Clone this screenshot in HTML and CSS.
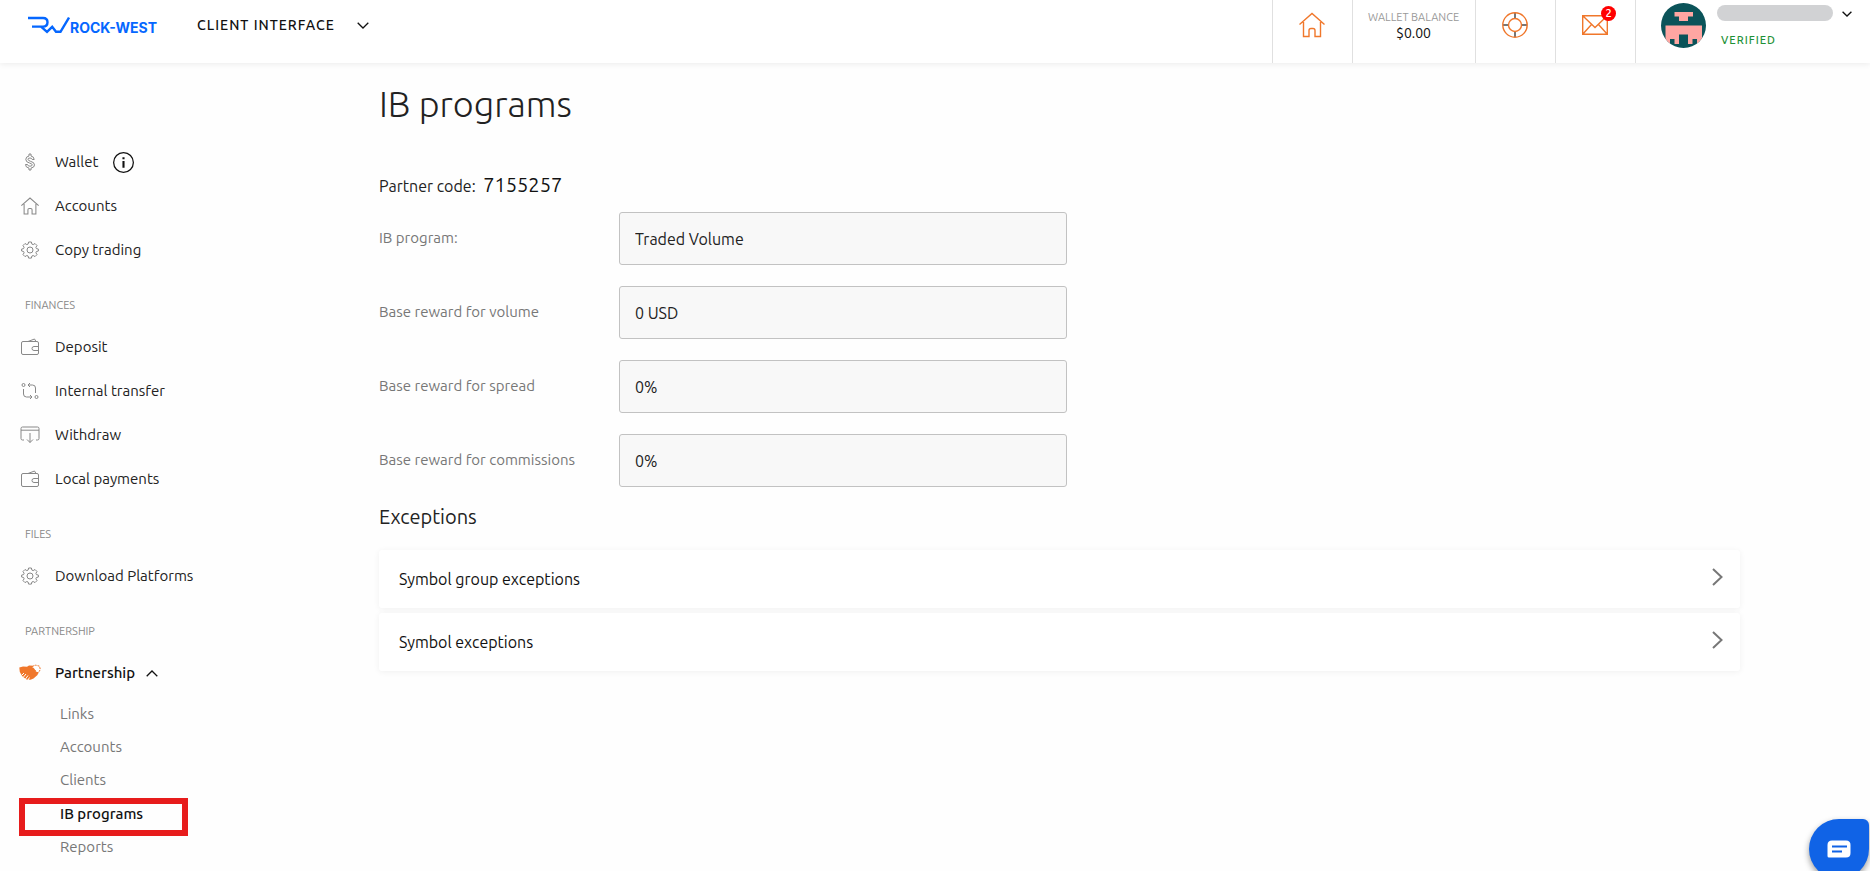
FILE: index.html
```
<!DOCTYPE html>
<html lang="en">
<head>
<meta charset="utf-8">
<title>IB programs</title>
<link rel="stylesheet" href="styles.css">
</head>
<body>
<svg class="sprite" aria-hidden="true">
  <symbol id="home" viewBox="0 0 26 26"><path d="M.5 12.500 13 1.500 25.500 12.500M4.500 10v14.500h5.500v-6q0-2 2-2h2q2 0 2 2v6h5.500V10"/></symbol>
  <symbol id="gear" viewBox="0 0 18 18"><path d="M7.600 1h2.800l.5 2.100 1.300.5 1.800-1.100 2 2-1.100 1.800.5 1.300 2 .5v1.900l-2 .5-.5 1.300 1.100 1.800-2 2-1.800-1.100-1.300.5-.5 2.100H7.600l-.5-2.100-1.300-.5L4 15.600l-2-2 1.100-1.800-.5-1.300L.600 10V8.100l2-.5.5-1.300L2 4.500l2-2 1.800 1.100 1.300-.5z"/><circle cx="9" cy="9" r="3"/></symbol>
  <symbol id="purse" viewBox="0 0 18 18"><path d="M2 3.500h14q1.500 0 1.500 1.500v10q0 1.500-1.500 1.500H2Q.5 16.500 .5 15V5Q.5 3.500 2 3.500zM7 3.500l6.500-2.500 1.500 2.500M17.500 8.500H13q-2 0-2 2t2 2h4.500"/></symbol>
  <symbol id="chevron" viewBox="0 0 12 7"><path d="M.7.800 6 6 11.300.800"/></symbol>
</svg>
<header class="topbar">
  <a class="logo" href="#">
    <svg class="logo-mark" viewBox="0 0 42 18" aria-hidden="true"><path d="M0 2h15q4.500 0 4.500 4.300t-4.500 4.300H4M13 10.600l6 5.200 5.200-5 3.800 5h4.500L41 1.500"/></svg>
    <span>ROCK-WEST</span>
  </a>
  <button class="switcher" type="button">CLIENT INTERFACE <svg class="chevron"><use href="#chevron"/></svg></button>
  <nav class="tools" aria-label="Account tools">
    <a class="tool" href="#" aria-label="Home"><svg class="tool-icon"><use href="#home"/></svg></a>
    <a class="tool balance" href="#"><span class="balance-label">WALLET BALANCE</span><span>$0.00</span></a>
    <a class="tool" href="#" aria-label="Support"><svg class="tool-icon" viewBox="0 0 26 26"><g class="spokes"><path d="M13 1v5.500M13 19.500V25M1 13h5.500M19.500 13H25"/></g><circle cx="13" cy="13" r="12.200"/><circle cx="13" cy="13" r="6.500"/></svg></a>
    <a class="tool mail" href="#" aria-label="Messages"><svg class="tool-icon" viewBox="0 0 26 26"><path d="M.7 3.700h24.600v18.600H.7zM.7 3.700 13 15.500l12.300-11.800M.7 22.300l8.800-9.800M25.300 22.300l-8.800-9.800"/></svg><span class="badge">2</span></a>
    <div class="profile">
      <svg class="avatar" viewBox="0 0 45 45" aria-hidden="true"><defs><clipPath id="round"><circle cx="22.500" cy="22.500" r="22.500"/></clipPath></defs><g clip-path="url(#round)"><path fill="#0b5359" d="M0 0h45v45H0z"/><path fill="#ffa6a2" d="M13.500 9h18.500v4.500h-5V18h-9v-4.500h-4.500zM4.500 22.500h36.500V45h-5v-9h-4.500v5H27v-9.500h-9V41h-4.500v-5H9v9H4.500z"/></g></svg>
      <div class="who"><span class="name"></span><span class="verified">VERIFIED</span></div>
      <button class="more" type="button" aria-label="Profile menu"><svg class="chevron small"><use href="#chevron"/></svg></button>
    </div>
  </nav>
</header>
<div class="page">
  <nav class="sidebar" aria-label="Main menu">
    <ul class="menu">
      <li><a href="#"><svg class="icon" viewBox="0 0 18 18"><path d="M8 1h2v2q3 .5 3.200 3.500h-2Q10.800 5 9 5 7 5 7 6.300t2.500 2q4 .9 4 3.600 0 2.600-3.500 3.200V17H8v-1.900q-3.500-.6-3.500-3.600h2q.3 1.700 2.500 1.700t2.200-1.400Q11.200 10.700 8.500 10 4.800 9.200 4.800 6.400 4.800 3.600 8 3z"/></svg>Wallet<svg class="info" viewBox="0 0 20 20" aria-label="Info"><circle cx="10" cy="10" r="9.400"/><path class="info-i" d="M10 5v2M10 8.500V15"/></svg></a></li>
      <li><a href="#"><svg class="icon house"><use href="#home"/></svg>Accounts</a></li>
      <li><a href="#"><svg class="icon"><use href="#gear"/></svg>Copy trading</a></li>
    </ul>
    <h2 class="group">FINANCES</h2>
    <ul class="menu">
      <li><a href="#"><svg class="icon"><use href="#purse"/></svg>Deposit</a></li>
      <li><a href="#"><svg class="icon" viewBox="0 0 18 18"><circle cx="2.500" cy="3" r="1.500"/><circle cx="15.500" cy="15" r="1.500"/><path d="M7 3h4.500q3 0 3 3v5M9 1 7 3l2 2M2.500 7v5q0 3 3 3H11M9 13l2 2-2 2"/></svg>Internal transfer</a></li>
      <li><a href="#"><svg class="icon" viewBox="0 0 18 18"><path d="M3 14H1.500Q0 14 0 12.500v-10Q0 1 1.500 1h15Q18 1 18 2.500v10q0 1.500-1.500 1.500H15M0 4.200h18M9 7v9.500M6 13.500l3 3 3-3"/></svg>Withdraw</a></li>
      <li><a href="#"><svg class="icon"><use href="#purse"/></svg>Local payments</a></li>
    </ul>
    <h2 class="group">FILES</h2>
    <ul class="menu">
      <li><a href="#"><svg class="icon"><use href="#gear"/></svg>Download Platforms</a></li>
    </ul>
    <h2 class="group">PARTNERSHIP</h2>
    <ul class="menu">
      <li><a class="open" href="#"><svg class="icon hands" viewBox="0 0 22 18"><path fill="#f0772b" stroke="none" d="M.3 3.500 4 2.500l4 .3 2-1.300 5 .3 1.500 2 .5 3 2.500 1.200-1 3-4 3.500-3 1.300-4-.2-4.200-3.300L.8 8z"/><path class="hand-line" d="M13 3q3-2.500 5-1.500l2.500.7.8 3.300-2 3.500-2.500-1.500-1-2z"/><path class="seam" d="m3 11 2-2M4.500 13l2.500-3M6.500 15l2.500-3.500M9 16l1.500-2.500"/></svg>Partnership<svg class="chevron up"><use href="#chevron"/></svg></a>
        <ul class="submenu">
          <li><a href="#">Links</a></li>
          <li><a href="#">Accounts</a></li>
          <li><a href="#">Clients</a></li>
          <li class="current"><a href="#" aria-current="page">IB programs</a></li>
          <li><a href="#">Reports</a></li>
        </ul>
      </li>
    </ul>
  </nav>
  <main class="content">
    <h1>IB programs</h1>
    <p class="partner">Partner code: <strong>7155257</strong></p>
    <form class="fields">
      <label for="program">IB program:</label><input id="program" value="Traded Volume" readonly>
      <label for="volume">Base reward for volume</label><input id="volume" value="0 USD" readonly>
      <label for="spread">Base reward for spread</label><input id="spread" value="0%" readonly>
      <label for="commissions">Base reward for commissions</label><input id="commissions" value="0%" readonly>
    </form>
    <h2 class="section">Exceptions</h2>
    <div class="cards">
      <button class="card" type="button">Symbol group exceptions<svg class="arrow" viewBox="0 0 11 18"><path d="m1 1 8.500 8L1 17"/></svg></button>
      <button class="card" type="button">Symbol exceptions<svg class="arrow" viewBox="0 0 11 18"><path d="m1 1 8.500 8L1 17"/></svg></button>
    </div>
  </main>
</div>
<button class="chat" type="button" aria-label="Open chat"><svg viewBox="0 0 24 18"><path fill="#fff" d="M5 .5h14q4.500 0 4.500 4.500v8q0 4.500-4.500 4.500H2Q.5 17.500.5 16V5Q.5.500 5 .5z"/><path class="lines" d="M5 6.500h15M5 11.500h10"/></svg></button>
</body>
</html>
```
FILE: styles.css
```
*, *::before { box-sizing: border-box; }
body {
  margin: 0;
  background: #fefefe;
  color: #222;
  font: 15px/20px Ubuntu, "Noto Sans", sans-serif;
}
a { color: inherit; text-decoration: none; }
ul { list-style: none; margin: 0; padding: 0; }
button { border: 0; padding: 0; background: none; color: inherit; font: inherit; cursor: pointer; }
svg { display: block; flex: none; fill: none; stroke: currentColor; }
.sprite { position: absolute; width: 0; height: 0; }
.chevron { width: 12px; height: 7px; stroke-width: 1.300; }

.topbar {
  display: flex;
  height: 63px;
  padding-left: 28px;
  background: #fff;
  box-shadow: 0 1px 6px rgba(0, 0, 0, .08);
}
.logo {
  display: flex;
  height: 50px;
  align-items: center;
  color: #0567ff;
  font: 700 14px/20px Inter, sans-serif;
}
.logo span { padding-top: 6px; }
.logo-mark { width: 42px; height: 18px; stroke-width: 2.400; }
.switcher {
  display: flex;
  align-items: center;
  gap: 22px;
  height: 50px;
  margin-left: 40px;
  color: #111;
  font-size: 14px;
  font-weight: 500;
  letter-spacing: 1px;
}
.tools { display: flex; margin-left: auto; }
.tool {
  display: flex;
  justify-content: center;
  width: 80px;
  padding: 12px 1px 0 0;
  border-left: 1px solid #e0e0e0;
  color: #f0772b;
}
.tool-icon { width: 26px; height: 26px; stroke-width: 1.400; }
.spokes { stroke: #777; stroke-width: 2; }
.balance {
  flex-direction: column;
  justify-content: flex-start;
  align-items: center;
  width: 123px;
  padding-top: 9px;
  color: #111;
  font-size: 14px;
  line-height: 17px;
}
.balance-label { color: #999; font-size: 11px; line-height: 16px; }
.mail { position: relative; }
.badge {
  position: absolute;
  top: 6px;
  left: 45px;
  width: 15px;
  height: 15px;
  border-radius: 50%;
  background: #f00;
  color: #fff;
  font-size: 11px;
  font-weight: 500;
  line-height: 15px;
  text-align: center;
}
.profile { display: flex; width: 235px; padding: 3px 18px 0 25px; border-left: 1px solid #e0e0e0; }
.avatar { width: 45px; height: 45px; stroke: none; }
.who { display: flex; flex-direction: column; gap: 10px; margin-left: 11px; padding-top: 2px; }
.name { width: 116px; height: 16px; border-radius: 8px; background: #d1d2d4; }
.verified { padding-left: 4px; color: #1e9137; font-size: 11px; font-weight: 500; line-height: 18px; letter-spacing: 1px; }
.more { height: 21px; margin-left: auto; }
.small { width: 10px; height: 6px; stroke: #111; stroke-width: 1.600; }

.page { display: flex; }
.sidebar { width: 379px; flex: none; padding-top: 77px; }
.menu a { display: flex; align-items: center; height: 44px; padding-left: 21px; }
.icon { width: 18px; height: 18px; margin-right: 16px; overflow: visible; color: #888; }
.house { stroke-width: 1.500; }
.info { width: 21px; height: 21px; margin-left: 15px; stroke: #111; stroke-width: 1.200; }
.info-i { stroke-width: 2; }
.group {
  margin: 0;
  padding: 23px 0 10px 25px;
  color: #888;
  font-size: 11px;
  font-weight: 400;
  line-height: 20px;
}
.menu .open { padding-left: 19px; color: #111; font-weight: 500; }
.hands { width: 22px; margin-right: 14px; }
.hand-line { fill: #fff; stroke: #f0772b; stroke-dasharray: 2 1; }
.seam { stroke: #fff; }
.up { margin-left: 11px; transform: rotate(180deg); }
.submenu { padding-top: 2px; }
.submenu a { height: 33px; padding-left: 60px; color: #777; }
.submenu .current { position: relative; margin-top: 1px; }
.submenu .current a { color: #111; font-weight: 500; }
.current::before {
  content: "";
  position: absolute;
  top: 1px;
  left: 19px;
  width: 169px;
  height: 38px;
  border: 6px solid #e71c1c;
}

.content { flex: 1; padding: 19px 130px 0 0; }
h1 { margin: 0; font-size: 36px; font-weight: 300; line-height: 44px; }
.partner { margin: 45px 0 0; font-size: 16px; line-height: 28px; }
.partner strong { margin-left: 4px; color: #111; font-size: 20px; font-weight: 400; }
.fields {
  display: grid;
  grid-template-columns: 240px 448px;
  row-gap: 21px;
  align-items: center;
  margin-top: 12px;
}
.fields label { padding-bottom: 2px; color: #777; }
.fields input {
  width: 100%;
  height: 53px;
  padding: 0 15px;
  border: 1px solid #c2c2c2;
  border-radius: 3px;
  background: #f8f8f8;
  color: #222;
  font: inherit;
  font-size: 16px;
}
.section { margin: 16px 0 19px; font-size: 20px; font-weight: 400; line-height: 28px; }
.cards { display: flex; flex-direction: column; gap: 5px; }
.card {
  display: flex;
  align-items: center;
  justify-content: space-between;
  height: 58px;
  padding: 0 17px 0 20px;
  border-radius: 3px;
  background: #fff;
  color: #111;
  font-size: 16px;
  box-shadow: 0 1px 6px rgba(0, 0, 0, .06);
}
.arrow { width: 11px; height: 18px; margin-bottom: 4px; color: #777; stroke-width: 2; }

.chat {
  position: fixed;
  right: 1px;
  bottom: -8px;
  display: flex;
  align-items: center;
  justify-content: center;
  width: 60px;
  height: 60px;
  border-radius: 30px 6px 30px 30px;
  background: #1063e6;
  box-shadow: 0 3px 6px rgba(0, 0, 0, .4);
}
.chat svg { width: 24px; height: 18px; stroke: none; }
.chat .lines { stroke: #1063e6; stroke-width: 2; }
```
